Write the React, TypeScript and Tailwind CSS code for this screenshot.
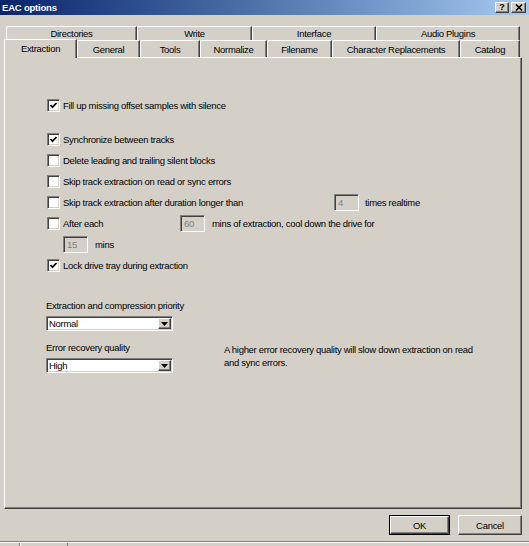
import React from "react";

const sunken =
  "border border-t-[#808080] border-l-[#808080] border-b-white border-r-white shadow-[inset_1px_1px_0_#404040,inset_-1px_-1px_0_#d4d0c8]";
const raised =
  "border border-t-white border-l-white border-b-[#404040] border-r-[#404040] shadow-[inset_-1px_-1px_0_#808080]";

const Check = ({ checked }: { checked?: boolean }) => (
  <span className={`w-[13px] h-[13px] shrink-0 bg-white flex items-center justify-center ${sunken}`}>
    {checked && (
      <svg width="9" height="9" viewBox="0 0 9 9">
        <path d="M1.5 4 L3.5 6.2 L7.5 2" fill="none" stroke="#000" strokeWidth="1.7" />
      </svg>
    )}
  </span>
);

const Box = ({ value }: { value: string }) => (
  <span className={`w-[25px] h-[17px] shrink-0 bg-[#d4d0c8] text-[#808080] pl-[3px] flex items-center ${sunken}`}>
    {value}
  </span>
);

const Combo = ({ value }: { value: string }) => (
  <div className={`w-[127px] h-[15px] bg-white flex items-center justify-between pl-[2px] pr-[1px] ${sunken}`}>
    <span>{value}</span>
    <span className={`w-[13px] h-[11px] bg-[#d4d0c8] flex items-center justify-center ${raised}`}>
      <svg width="7" height="4" viewBox="0 0 7 4">
        <path d="M0 0 H7 L3.5 4 Z" fill="#000" />
      </svg>
    </span>
  </div>
);

const Row = ({ checked, children }: { checked?: boolean; children: React.ReactNode }) => (
  <div className="h-[21px] flex items-center gap-[3px]">
    <Check checked={checked} />
    <span className="flex items-center">{children}</span>
  </div>
);

const backTabs = [
  { label: "Directories", w: "w-[131px]" },
  { label: "Write", w: "w-[115px]" },
  { label: "Interface", w: "w-[124px]" },
  { label: "Audio Plugins", w: "w-[144px]" },
];

const frontTabs = [
  { label: "General", w: "w-[63px]" },
  { label: "Tools", w: "w-[60px]" },
  { label: "Normalize", w: "w-[67px]" },
  { label: "Filename", w: "w-[65px]" },
  { label: "Character Replacements", w: "w-[128px]" },
  { label: "Catalog", w: "w-[60px]" },
];

const tabCls =
  "h-full flex items-center justify-center border-t border-l border-r border-t-white border-l-white border-r-[#404040] rounded-tl-[2px] shadow-[inset_-1px_0_0_#808080]";

export default function App() {
  return (
    <div className="w-[529px] h-[546px] overflow-hidden bg-[#d4d0c8] flex flex-col text-black text-[9.5px] tracking-[-0.3px] leading-[13px] font-['Liberation_Sans',Arial,sans-serif]">
      {/* title bar */}
      <div className="h-[15px] shrink-0 flex items-center justify-between pl-[2px] pr-[3px] bg-gradient-to-r from-[#0a246a] to-[#a6caf0]">
        <span className="text-white font-bold tracking-[-0.2px] text-[9.5px]">EAC options</span>
        <div className="flex gap-[2px]">
          <span className={`w-[14px] h-[11px] bg-[#d4d0c8] flex items-center justify-center font-bold text-[9px] leading-none tracking-normal ${raised}`}>
            ?
          </span>
          <span className={`w-[15px] h-[11px] bg-[#d4d0c8] flex items-center justify-center ${raised}`}>
            <svg width="8" height="7" viewBox="0 0 8 7">
              <path d="M1 0.5 L7 6.5 M7 0.5 L1 6.5" stroke="#000" strokeWidth="1.6" />
            </svg>
          </span>
        </div>
      </div>

      {/* back tab row */}
      <div className="mt-[11px] ml-[6px] h-[14px] flex">
        {backTabs.map(t => (
          <div key={t.label} className={`${t.w} ${tabCls}`}>
            {t.label}
          </div>
        ))}
      </div>

      {/* front tab row */}
      <div className="ml-[4px] h-[17px] flex items-end relative z-10">
        <div className="w-[73px] h-[19px] -mb-px bg-[#d4d0c8] flex items-start justify-center pt-[2px] border-t border-l border-r border-t-white border-l-white border-r-[#404040] rounded-tl-[2px] shadow-[inset_-1px_0_0_#808080]">
          Extraction
        </div>
        {frontTabs.map(t => (
          <div key={t.label} className={`${t.w} ${tabCls} pt-[1px]`}>
            {t.label}
          </div>
        ))}
      </div>

      {/* panel */}
      <div className={`ml-[4px] w-[518px] h-[452px] shrink-0 flex flex-col pl-[42px] pt-[37px] ${raised}`}>
        <Row checked>Fill up missing offset samples with silence</Row>
        <div className="mt-[13px]">
          <Row checked>Synchronize between tracks</Row>
          <Row>Delete leading and trailing silent blocks</Row>
          <Row>Skip track extraction on read or sync errors</Row>
          <Row>
            <span className="w-[271px] shrink-0">Skip track extraction after duration longer than</span>
            <Box value="4" />
            <span className="ml-[6px]">times realtime</span>
          </Row>
          <Row>
            <span className="w-[117px] shrink-0">After each</span>
            <Box value="60" />
            <span className="ml-[7px]">mins of extraction, cool down the drive for</span>
          </Row>
          <div className="h-[21px] flex items-center pl-[16px]">
            <Box value="15" />
            <span className="ml-[7px]">mins</span>
          </div>
          <Row checked>Lock drive tray during extraction</Row>
        </div>

        <div className="-ml-px mt-[23px]">
          <div>Extraction and compression priority</div>
          <div className="mt-[4px]">
            <Combo value="Normal" />
          </div>
          <div className="mt-[10px] flex">
            <div className="w-[178px] shrink-0">
              <div>Error recovery quality</div>
              <div className="mt-[4px]">
                <Combo value="High" />
              </div>
            </div>
            <p className="pt-[2px]">
              A higher error recovery quality will slow down extraction on read
              <br />
              and sync errors.
            </p>
          </div>
        </div>
      </div>

      {/* buttons */}
      <div className="mt-[6px] pr-[7px] flex justify-end gap-[8px]">
        <button className="w-[61px] h-[20px] border border-black bg-[#d4d0c8] p-0">
          <span className={`w-full h-full flex items-center justify-center ${raised}`}>OK</span>
        </button>
        <button className={`w-[64px] h-[20px] bg-[#d4d0c8] flex items-center justify-center ${raised}`}>Cancel</button>
      </div>

      <div className="mt-[6px] border-t border-t-[#808080] border-b border-b-white" />
      <div className="flex h-[3px]">
        <div className="w-[20px] border-r border-r-[#808080]" />
        <div className="w-[48px] border-l border-l-white border-r border-r-[#808080]" />
      </div>
    </div>
  );
}
